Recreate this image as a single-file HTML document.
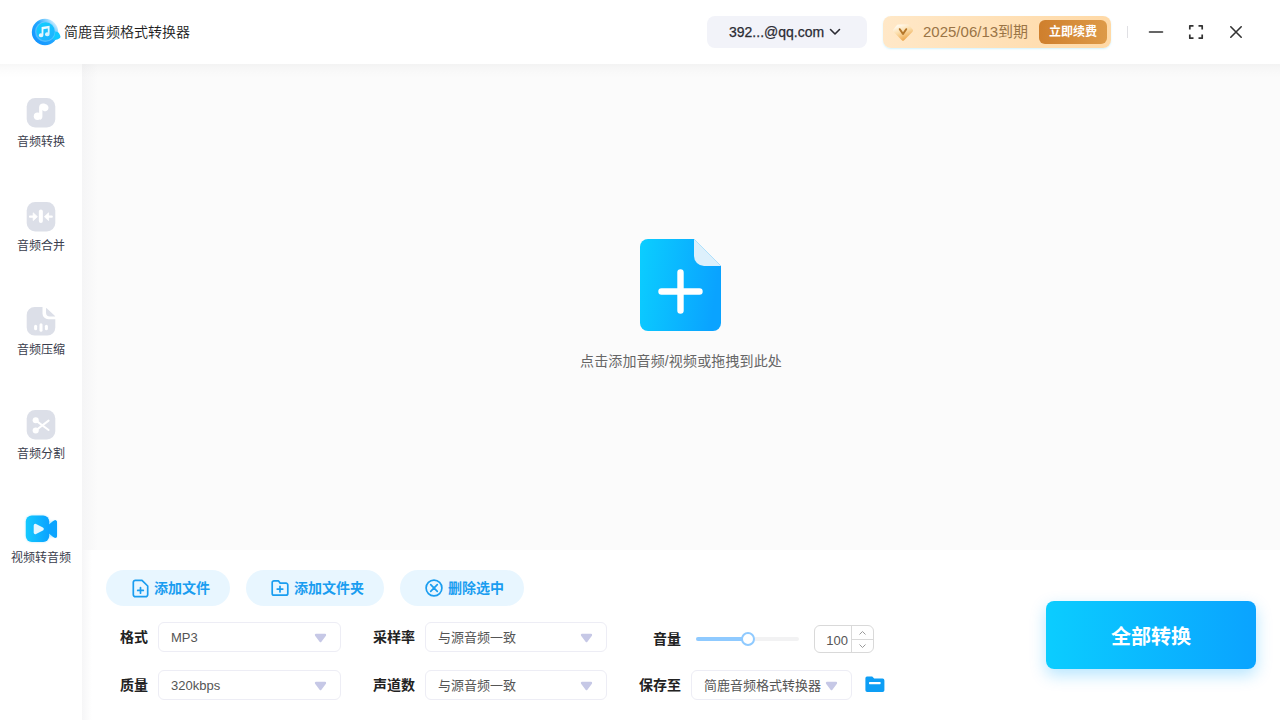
<!DOCTYPE html>
<html lang="zh-CN">
<head>
<meta charset="utf-8">
<title>简鹿音频格式转换器</title>
<style>
*{box-sizing:border-box;margin:0;padding:0}
html,body{width:1280px;height:720px;overflow:hidden;background:#fff}
body{font-family:"Liberation Sans","Noto Sans CJK SC",sans-serif;color:#333;position:relative;font-size:14px}
.abs{position:absolute}
#titlebar{position:absolute;left:0;top:0;width:1280px;height:64px;background:#fff;z-index:5}
#sidebar{position:absolute;left:0;top:64px;width:82px;height:656px;background:#fff;z-index:3}
#main{position:absolute;left:82px;top:64px;width:1198px;height:486px;background:#fbfbfb}
#main:before{content:"";position:absolute;left:0;top:0;width:16px;height:100%;background:linear-gradient(90deg,#f5f5f6,#fbfbfb)}
#topshadow{position:absolute;left:0;top:64px;width:1280px;height:14px;background:linear-gradient(180deg,rgba(0,0,0,.03),rgba(0,0,0,.008) 60%,rgba(0,0,0,0));z-index:4}
#bottom{position:absolute;left:82px;top:550px;width:1198px;height:170px;background:#fff}
#bottom:before{content:"";position:absolute;left:0;top:0;width:10px;height:100%;background:linear-gradient(90deg,#f6f6f7,#fff)}
.apptitle{position:absolute;left:64px;top:22px;font-size:14px;line-height:20px;color:#1c1c1c;font-weight:350}
.acct{position:absolute;left:707px;top:16px;width:160px;height:32px;border-radius:8px;background:#f2f3f9}
.acct span{position:absolute;left:22px;top:6px;font-size:14px;line-height:20px;color:#2b2b33;-webkit-text-stroke:.25px #2b2b33}
.vip{position:absolute;left:883px;top:16px;width:228px;height:32px;border-radius:8px;background:linear-gradient(90deg,#ffe8c8,#ffd9a6);box-shadow:0 1px 2px rgba(120,220,255,.35)}
.vip .date{position:absolute;left:40px;top:6px;font-size:15px;line-height:20px;color:#9a7446}
.vip .renew{position:absolute;left:156px;top:4px;width:68px;height:24px;border-radius:6px;background:linear-gradient(90deg,#cf7f2d,#dd9a48);color:#fff;font-weight:bold;font-size:12px;line-height:24px;text-align:center}
.nav{position:absolute;left:0;width:82px;text-align:center;font-size:12px;line-height:16px;color:#3a3d4d}
.nav .ic{position:absolute;left:26px;top:0;width:30px;height:30px}
.nav .lb{position:absolute;left:0;width:82px;top:36px}
.pill{position:absolute;top:570px;height:36px;border-radius:18px;background:#e8f6ff;color:#1a9df0;font-weight:bold;font-size:14px;line-height:36px}
.pill svg{position:absolute;top:9px}
.pill span{position:absolute;top:0;white-space:nowrap}
.flabel{position:absolute;font-weight:bold;font-size:14px;line-height:20px;color:#222;white-space:nowrap}
.sel{position:absolute;height:30px;border:1px solid #ededf5;border-radius:6px;background:#fff;font-size:13px;color:#555}
.sel span{position:absolute;left:12px;top:6px;line-height:18px;white-space:nowrap}
.sel svg{position:absolute;top:10px}
.convert{position:absolute;left:1046px;top:601px;width:210px;height:68px;border-radius:8px;background:linear-gradient(90deg,#0bcdff,#0aa3ff);box-shadow:0 6px 16px rgba(10,170,255,.30);color:#fff;font-weight:bold;font-size:20px;line-height:72px;text-align:center}
</style>
</head>
<body>
<div id="main">
<svg class="abs" style="left:558px;top:175px" width="81" height="92" viewBox="0 0 81 92"><defs><linearGradient id="lg4" x1="0" y1="0" x2="1" y2="0.15"><stop offset="0" stop-color="#0bceff"/><stop offset="1" stop-color="#0aa3ff"/></linearGradient></defs>
<path d="M8 0 H54 L81 27 V84 A8 8 0 0 1 73 92 H8 A8 8 0 0 1 0 84 V8 A8 8 0 0 1 8 0 Z" fill="url(#lg4)"/>
<path d="M54 0 L81 27 H64 A10 10 0 0 1 54 17 Z" fill="#ddf0fc"/>
<path d="M40.5 33.5 V71.5 M21.5 52.5 H59.5" stroke="#fff" stroke-width="6.4" stroke-linecap="round"/></svg>
<div class="abs" style="left:399px;top:287px;width:400px;text-align:center;font-size:14px;line-height:20px;color:#666;letter-spacing:.14px">点击添加音频/视频或拖拽到此处</div>
</div>
<div id="bottom"></div>
<div class="pill" style="left:106px;width:124px"><svg style="left:26px;top:8.5px" width="17" height="19" viewBox="0 0 17 19"><path d="M3.4 1.3 H10 L15.7 7 V15.6 A2.1 2.1 0 0 1 13.6 17.7 H3.4 A2.1 2.1 0 0 1 1.3 15.6 V3.4 A2.1 2.1 0 0 1 3.4 1.3 Z" fill="none" stroke="#1a9df0" stroke-width="1.7" stroke-linejoin="round"/><path d="M8.5 8.6 V14.2 M5.7 11.4 H11.3" stroke="#1a9df0" stroke-width="1.7" stroke-linecap="round"/></svg><span style="left:48px">添加文件</span></div>
<div class="pill" style="left:246px;width:138px"><svg style="left:25px" width="18" height="18" viewBox="0 0 18 18"><path d="M3 1.8 H7.4 L9.2 4.2 H15 A1.8 1.8 0 0 1 16.8 6 V14.4 A1.8 1.8 0 0 1 15 16.2 H3 A1.8 1.8 0 0 1 1.2 14.4 V3.6 A1.8 1.8 0 0 1 3 1.8 Z" fill="none" stroke="#1a9df0" stroke-width="1.7" stroke-linejoin="round"/><path d="M9 7.3 V12.9 M6.2 10.1 H11.8" stroke="#1a9df0" stroke-width="1.7" stroke-linecap="round"/></svg><span style="left:48px">添加文件夹</span></div>
<div class="pill" style="left:400px;width:124px"><svg style="left:25px" width="18" height="18" viewBox="0 0 18 18"><circle cx="9" cy="9" r="7.9" fill="none" stroke="#1a9df0" stroke-width="1.7"/><path d="M5.7 5.7 L12.3 12.3 M12.3 5.7 L5.7 12.3" stroke="#1a9df0" stroke-width="1.7" stroke-linecap="round"/></svg><span style="left:48px">删除选中</span></div>

<div class="flabel" style="left:120px;top:627px">格式</div>
<div class="sel" style="left:158px;top:622px;width:183px"><span>MP3</span><svg style="left:155px" width="13" height="11" viewBox="0 0 13 11"><path d="M2 2 H11 L6.5 8 Z" fill="#c6c8e6" stroke="#c6c8e6" stroke-width="2.3" stroke-linejoin="round"/></svg></div>
<div class="flabel" style="left:373px;top:627px">采样率</div>
<div class="sel" style="left:425px;top:622px;width:182px"><span>与源音频一致</span><svg style="left:154px" width="13" height="11" viewBox="0 0 13 11"><path d="M2 2 H11 L6.5 8 Z" fill="#c6c8e6" stroke="#c6c8e6" stroke-width="2.3" stroke-linejoin="round"/></svg></div>
<div class="flabel" style="left:653px;top:629px">音量</div>
<div class="abs" style="left:696px;top:637px;width:103px;height:4px;border-radius:2px;background:#f2f2f3"></div>
<div class="abs" style="left:696px;top:637px;width:50px;height:4px;border-radius:2px;background:#8fcaff"></div>
<div class="abs" style="left:741px;top:632px;width:14px;height:14px;border-radius:7px;background:#fff;border:2px solid #8fcaff"></div>
<div class="abs" style="left:814px;top:625px;width:60px;height:28px;border:1px solid #d9d9d9;border-radius:6px;background:#fff">
<div class="abs" style="left:36px;top:0;width:1px;height:26px;background:#d9d9d9"></div>
<div class="abs" style="left:37px;top:13px;width:21px;height:1px;background:#d9d9d9"></div>
<div class="abs" style="left:0;top:6px;width:33px;text-align:right;font-size:13px;line-height:18px;color:#555">100</div>
<svg class="abs" style="left:43px;top:4px" width="9" height="6" viewBox="0 0 9 6"><path d="M1.5 4.5 L4.5 1.5 L7.5 4.5" fill="none" stroke="#999" stroke-width="1"/></svg>
<svg class="abs" style="left:43px;top:17px" width="9" height="6" viewBox="0 0 9 6"><path d="M1.5 1.5 L4.5 4.5 L7.5 1.5" fill="none" stroke="#999" stroke-width="1"/></svg>
</div>

<div class="flabel" style="left:120px;top:675px">质量</div>
<div class="sel" style="left:158px;top:670px;width:183px"><span>320kbps</span><svg style="left:155px" width="13" height="11" viewBox="0 0 13 11"><path d="M2 2 H11 L6.5 8 Z" fill="#c6c8e6" stroke="#c6c8e6" stroke-width="2.3" stroke-linejoin="round"/></svg></div>
<div class="flabel" style="left:373px;top:675px">声道数</div>
<div class="sel" style="left:425px;top:670px;width:182px"><span>与源音频一致</span><svg style="left:154px" width="13" height="11" viewBox="0 0 13 11"><path d="M2 2 H11 L6.5 8 Z" fill="#c6c8e6" stroke="#c6c8e6" stroke-width="2.3" stroke-linejoin="round"/></svg></div>
<div class="flabel" style="left:639px;top:675px">保存至</div>
<div class="sel" style="left:691px;top:670px;width:161px"><span>简鹿音频格式转换器</span><svg style="left:133px" width="13" height="11" viewBox="0 0 13 11"><path d="M2 2 H11 L6.5 8 Z" fill="#c6c8e6" stroke="#c6c8e6" stroke-width="2.3" stroke-linejoin="round"/></svg></div>
<svg class="abs" style="left:865px;top:676px" width="20" height="17" viewBox="0 0 20 17"><path d="M2 0.5 H7.2 L9.2 2.6 H17.6 A1.8 1.8 0 0 1 19.4 4.4 V14.2 A1.8 1.8 0 0 1 17.6 16 H2.2 A1.8 1.8 0 0 1 0.4 14.2 V2.2 A1.7 1.7 0 0 1 2 0.5 Z" fill="#0d9ef5"/><rect x="4" y="6" width="11.6" height="2.2" rx=".6" fill="#fff"/></svg>
<div class="convert">全部转换</div>
<div id="topshadow"></div>
<div id="sidebar">
<div class="nav" style="top:34px"><svg class="ic" viewBox="0 0 30 30"><rect x="0.7" y="0.1" width="28.6" height="29.5" rx="8.5" fill="#dcdfe8"/><circle cx="11.5" cy="18.3" r="3.7" fill="#fff"/><path d="M13.1 18.2 V9.6 C13.1 7 14.8 5.6 17 5.6 C19.6 5.6 22.4 7.2 22.5 9.6 C22.5 11.6 21.4 13.1 19.6 13.3 C18.4 13.4 17.2 12.9 16.4 12 V18.4 C16.4 20 15.4 21.4 14 21.8 Z" fill="#fff"/></svg><div class="lb">音频转换</div></div>
<div class="nav" style="top:138px"><svg class="ic" viewBox="0 0 30 30"><rect x="0.7" y="0.1" width="28.6" height="29.5" rx="8.5" fill="#dcdfe8"/><rect x="12.85" y="7.6" width="4" height="13.5" rx="2" fill="#fff"/><path d="M4 14.7 H8 M25.8 14.7 H21.8" fill="none" stroke="#fff" stroke-width="2.2" stroke-linecap="round"/><path d="M7.2 10.8 L11.4 14.7 L7.2 18.6 Z M22.6 10.8 L18.4 14.7 L22.6 18.6 Z" fill="#fff" stroke="#fff" stroke-width=".8" stroke-linejoin="round"/></svg><div class="lb">音频合并</div></div>
<div class="nav" style="top:242px"><svg class="ic" viewBox="0 0 30 30"><path d="M8.7 1 H16.5 V7.4 A5.8 5.8 0 0 0 22.3 13.2 H29.3 V21.6 A8 8 0 0 1 21.3 29.6 H8.7 A8 8 0 0 1 0.7 21.6 V9 A8 8 0 0 1 8.7 1 Z" fill="#dcdfe8"/><path d="M20 2.4 Q20 1.5 20.7 2.2 L29 10 Q29.5 10.6 28.8 10.6 H24 A4 4 0 0 1 20 6.6 Z" fill="#dcdfe8"/><rect x="8.1" y="18.8" width="3" height="5.5" rx="1.5" fill="#fff"/><rect x="13.5" y="17.3" width="3" height="8.5" rx="1.5" fill="#fff"/><rect x="18.9" y="18.8" width="3" height="5.5" rx="1.5" fill="#fff"/></svg><div class="lb">音频压缩</div></div>
<div class="nav" style="top:346px"><svg class="ic" viewBox="0 0 30 30"><rect x="0.7" y="0.1" width="28.6" height="29.5" rx="8.5" fill="#dcdfe8"/><circle cx="9.7" cy="10.3" r="3.05" fill="#fff"/><circle cx="9.7" cy="20.5" r="3.05" fill="#fff"/><path d="M10 10.6 L22.6 20 M10 20.2 L22.6 10.6" stroke="#fff" stroke-width="2" stroke-linecap="round"/></svg><div class="lb">音频分割</div></div>
<div class="nav" style="top:450px"><svg class="ic" style="left:24px;top:-2px;width:36px;height:34px;overflow:visible" viewBox="0 0 36 34"><defs><linearGradient id="lg3" x1="0" y1="0" x2="1" y2="0"><stop offset="0" stop-color="#14c9ff"/><stop offset="1" stop-color="#0aa2ff"/></linearGradient><filter id="gl" x="-30%" y="-30%" width="160%" height="160%"><feGaussianBlur stdDeviation="1.3"/></filter></defs><g filter="url(#gl)" opacity=".45"><rect x="1.8" y="3.6" width="23.4" height="26.5" rx="6" fill="#4fcbff"/><rect x="25" y="9" width="8" height="16" rx="2" fill="#4fcbff"/></g><path d="M24.6 12.9 L29.4 9 Q33 6.8 33 10.8 V23.2 Q33 27.2 29.4 25 L24.6 21.1 Z" fill="url(#lg3)"/><path d="M24.6 12.9 L29.4 9 Q33 6.8 33 10.8 V23.2 Q33 27.2 29.4 25 L24.6 21.1 Z" fill="#0aa4ff"/><rect x="1.8" y="3.6" width="23.4" height="26.5" rx="6" fill="url(#lg3)"/><path d="M11.3 13.4 L18.2 17 L11.3 20.6 Z" fill="#e4f6ff" stroke="#e4f6ff" stroke-width="3.2" stroke-linejoin="round"/></svg><div class="lb">视频转音频</div></div>
</div>
<div id="titlebar">
<svg class="abs" style="left:30px;top:16px" width="32" height="32" viewBox="0 0 32 32">
<defs><linearGradient id="lg1" x1="0.1" y1="0.9" x2="0.95" y2="0.15"><stop offset="0" stop-color="#1493ff"/><stop offset=".55" stop-color="#22a8ff"/><stop offset=".85" stop-color="#9fdcff"/><stop offset="1" stop-color="#eaf8ff"/></linearGradient>
<linearGradient id="lg1b" x1="0.2" y1="0" x2="0.8" y2="1"><stop offset="0" stop-color="#0fcfff"/><stop offset="1" stop-color="#1fb0ff"/></linearGradient>
<linearGradient id="lg1c" x1="0" y1="0" x2="1" y2="1"><stop offset="0" stop-color="#ffffff"/><stop offset="1" stop-color="#c9efff"/></linearGradient></defs>
<circle cx="15" cy="16" r="13.2" fill="url(#lg1)"/>
<path d="M22.5 16.4 C25 14.8 28.6 15.6 29.6 18.2 C30.4 19.8 30.9 21 30 21.9 C28 23.4 25 24.2 22.5 23.6 Z" fill="#12c8ff"/>
<circle cx="15.2" cy="15.8" r="10.2" fill="#7fd6ff" opacity=".55"/>
<circle cx="15.6" cy="15.4" r="9.2" fill="url(#lg1b)"/>
<path d="M11.6 11 L19.6 9.8 V18.2 A2.3 1.9 0 1 1 17.8 16.4 V12.6 L13.4 13.3 V19.2 A2.3 1.9 0 1 1 11.6 17.4 Z" fill="url(#lg1c)"/>
</svg>
<div class="apptitle">简鹿音频格式转换器</div>
<div class="acct"><span>392...@qq.com</span>
<svg class="abs" style="left:122px;top:11px" width="12" height="10" viewBox="0 0 12 10"><path d="M1.5 2.5 L6 7 L10.5 2.5" fill="none" stroke="#2b2b33" stroke-width="1.6" stroke-linecap="round" stroke-linejoin="round"/></svg>
</div>
<div class="vip">
<svg class="abs" style="left:9px;top:7px" width="22" height="19" viewBox="0 0 22 19">
<defs><linearGradient id="lg2" x1="0.2" y1="0" x2="0.7" y2="1"><stop offset="0" stop-color="#fff8ea"/><stop offset=".45" stop-color="#fbdca8"/><stop offset="1" stop-color="#eda94f"/></linearGradient></defs>
<path d="M6 3.2 H16 L19.4 7.6 L11 16 L2.6 7.6 Z" fill="url(#lg2)" stroke="url(#lg2)" stroke-width="3.2" stroke-linejoin="round"/>
<path d="M7.8 6.2 L11 11 L14.2 6.2" fill="none" stroke="#b5772a" stroke-width="2" stroke-linecap="round" stroke-linejoin="round"/>
</svg>
<div class="date">2025/06/13到期</div>
<div class="renew">立即续费</div>
</div>
<div class="abs" style="left:1127px;top:26px;width:1px;height:12px;background:#e0e0e4"></div>
<svg class="abs" style="left:1148px;top:24px" width="16" height="16" viewBox="0 0 16 16"><path d="M1.5 8 H14.5" stroke="#333" stroke-width="1.6" stroke-linecap="round"/></svg>
<svg class="abs" style="left:1188px;top:24px" width="16" height="16" viewBox="0 0 16 16"><path d="M1.8 5.5 V1.8 H5.5 M10.5 1.8 H14.2 V5.5 M14.2 10.5 V14.2 H10.5 M5.5 14.2 H1.8 V10.5" fill="none" stroke="#333" stroke-width="1.7" stroke-linejoin="round"/></svg>
<svg class="abs" style="left:1228px;top:24px" width="16" height="16" viewBox="0 0 16 16"><path d="M2.8 2.8 L13.2 13.2 M13.2 2.8 L2.8 13.2" stroke="#333" stroke-width="1.6" stroke-linecap="round"/></svg>
</div>
</body>
</html>
